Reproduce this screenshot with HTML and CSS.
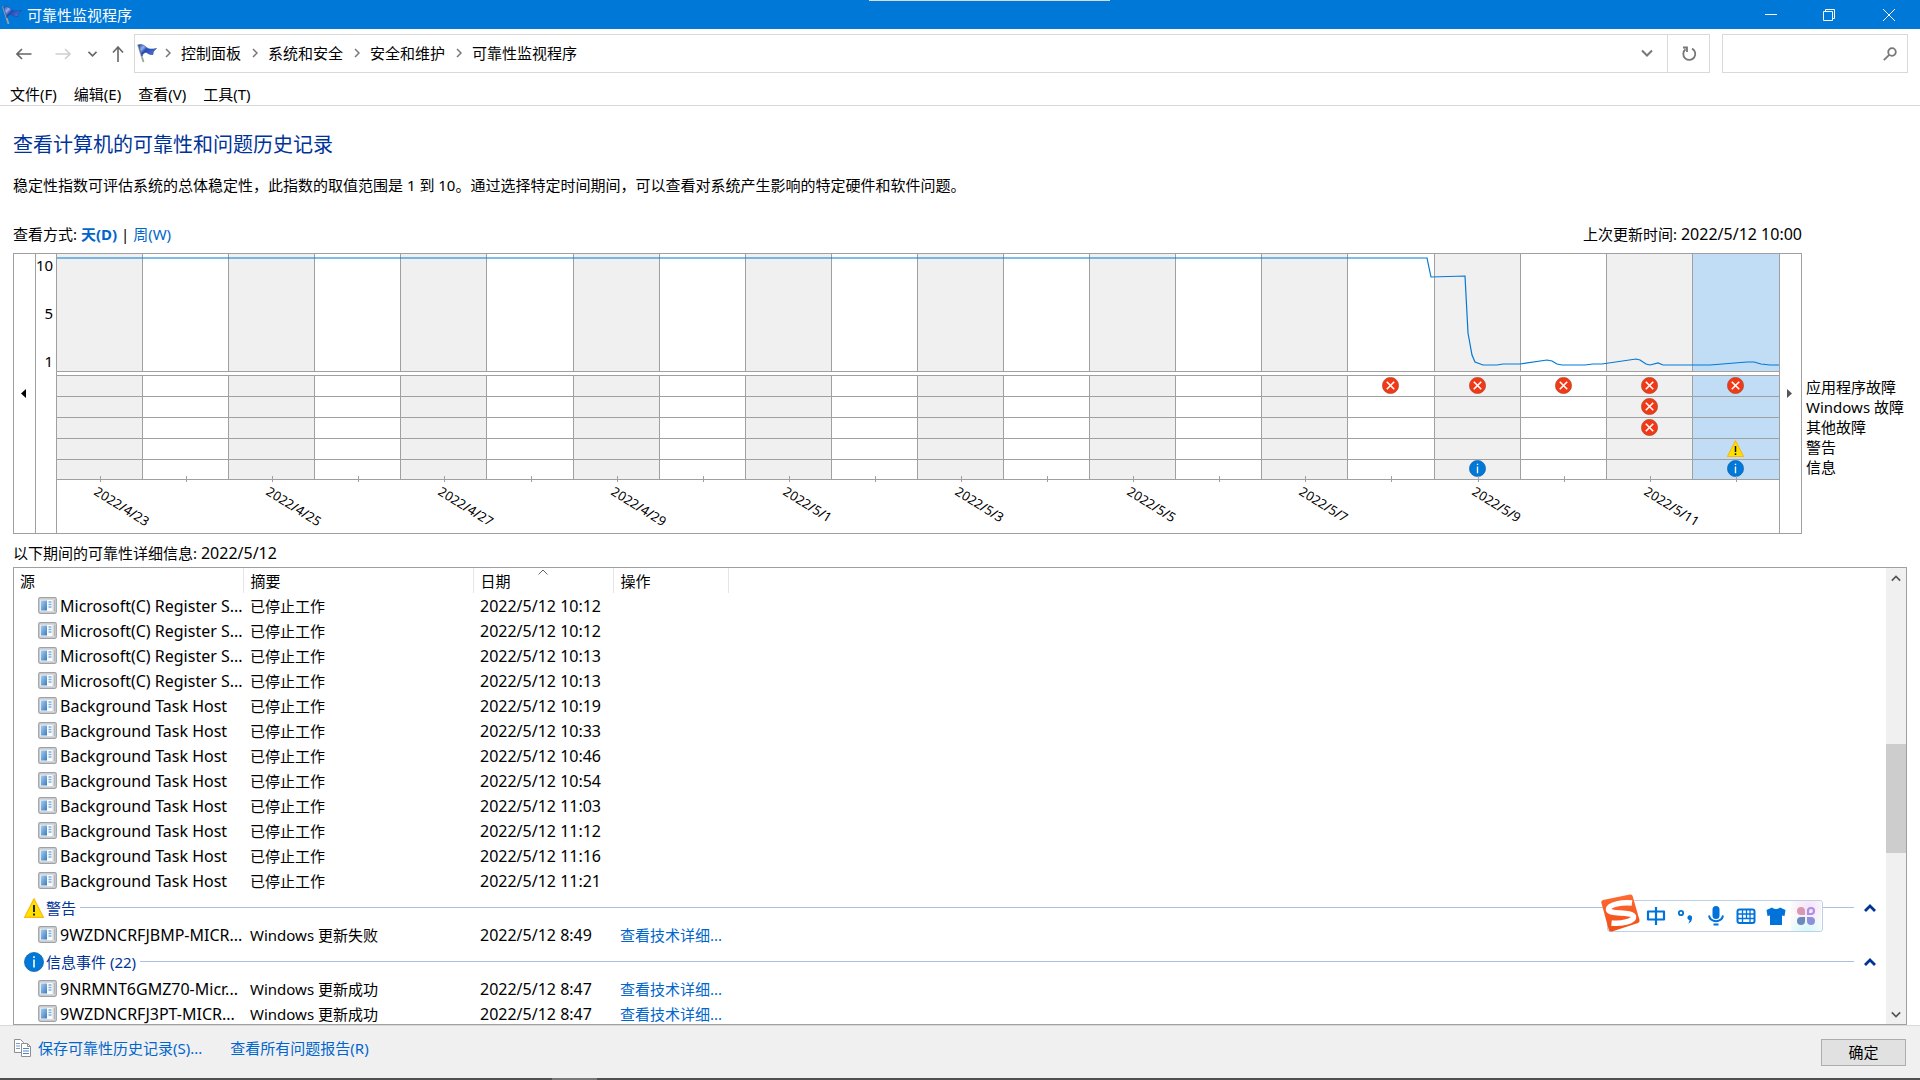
FILE: index.html
```html
<!DOCTYPE html>
<html lang="zh-CN">
<head>
    <meta charset="UTF-8">
    <meta name="viewport" content="width=device-width, initial-scale=1.0">
    <title>可靠性监视程序</title>
    <link rel="stylesheet" href="styles.css">
</head>
<body>
    <!-- Shared icons -->
    <svg class="sprite" aria-hidden="true">
        <defs>
            <linearGradient id="flagBlue" x1="0" y1="0" x2="1" y2="0.6">
                <stop offset="0" stop-color="#1d3f9c"/>
                <stop offset="0.3" stop-color="#8fb2f0"/>
                <stop offset="0.5" stop-color="#2547b4"/>
                <stop offset="1" stop-color="#4a76d8"/>
            </linearGradient>
            <linearGradient id="appBlue" x1="0" y1="0" x2="1" y2="1">
                <stop offset="0" stop-color="#a5cdf0"/>
                <stop offset="1" stop-color="#3a7cc0"/>
            </linearGradient>
            <linearGradient id="imeOrange" x1="0" y1="0" x2="0" y2="1">
                <stop offset="0" stop-color="#ff6a33"/>
                <stop offset="1" stop-color="#f04e14"/>
            </linearGradient>
        </defs>
        <symbol id="flag" viewBox="0 0 20 20">
            <path d="M1 1.500 6.500 19" stroke="#9aa2a9" stroke-width="1.800" fill="none"/>
            <path d="M1.500 2C4 .8 7 2 9.500 4.500c2 1.800 5 2 10 1-2.500 2-3.500 3-3.500 6-3 .5-4.500-.8-6.500-2C7.500 9 6 10.500 5 13z" fill="url(#flagBlue)" stroke="#27449b" stroke-width=".6"/>
        </symbol>
        <symbol id="error" viewBox="0 0 16 16">
            <circle cx="8" cy="8" r="7.600" fill="#f03a17" stroke="#b5482f" stroke-width=".7"/>
            <path d="M4.500 4.500l7 7M11.500 4.500l-7 7" stroke="#fff" stroke-width="1.500"/>
        </symbol>
        <symbol id="warning" viewBox="0 0 20 20">
            <path d="M10 .8 19.400 19.300H.6z" fill="#ffe100" stroke="#fcb814" stroke-width="1.200"/>
            <path d="M10 7v7M10 15.500v2" stroke="#111" stroke-width="1.800"/>
        </symbol>
        <symbol id="info" viewBox="0 0 20 20">
            <circle cx="10" cy="10" r="9.500" fill="#0078d7" stroke="#1560a8" stroke-width=".8"/>
            <path d="M10 4.300v1.700M10 7.500v8" stroke="#fff" stroke-width="1.600"/>
        </symbol>
        <symbol id="app" viewBox="0 0 19 17">
            <rect x=".7" y=".7" width="17.600" height="15.600" rx="1.500" fill="#d6d9dc" stroke="#9ea2a6" stroke-width="1.200"/>
            <rect x="2.500" y="3" width="12" height="11" fill="#fafbfc"/>
            <rect x="3" y="3.500" width="6" height="10" fill="url(#appBlue)"/>
            <path d="M10.500 5h3M10.500 7.500h3M10.500 10h3" stroke="#7fb0dc" stroke-width="1.300"/>
            <path d="M16.500 3v11" stroke="#b3b7bb" stroke-width="1"/>
        </symbol>
        <symbol id="chevronRight" viewBox="0 0 6 10">
            <path d="M1 1l4 4-4 4" fill="none" stroke="#777" stroke-width="1.500"/>
        </symbol>
        <symbol id="chevronDown" viewBox="0 0 12 8">
            <path d="M1 1.500l5 5 5-5" fill="none" stroke="currentColor" stroke-width="2"/>
        </symbol>
        <symbol id="chevronUp" viewBox="0 0 12 8">
            <path d="M1 6.500l5-5 5 5" fill="none" stroke="currentColor" stroke-width="2"/>
        </symbol>
        <symbol id="collapse" viewBox="0 0 12 8">
            <path d="M1 7l5-5 5 5" fill="none" stroke="currentColor" stroke-width="2.800"/>
        </symbol>
    </svg>

    <header class="titlebar">
        <svg class="flag"><use href="#flag"/></svg>
        <span class="title">可靠性监视程序</span>
        <div class="window-buttons">
            <button type="button" aria-label="最小化"><svg viewBox="0 0 12 12"><path d="M0 5.500h12"/></svg></button>
            <button type="button" aria-label="还原"><svg viewBox="0 0 12 12"><path d="M.5 2.500h9v9h-9zM2.500 2.500v-2h9v9h-2"/></svg></button>
            <button type="button" aria-label="关闭"><svg viewBox="0 0 12 12"><path d="M0 0l12 12M12 0L0 12"/></svg></button>
        </div>
    </header>

    <div class="navbar">
        <div class="nav-buttons">
            <button type="button" aria-label="后退"><svg width="16" height="12" viewBox="0 0 16 12"><path d="M15.500 6H1M6 1L1 6l5 5"/></svg></button>
            <button type="button" class="disabled" aria-label="前进" disabled><svg width="16" height="12" viewBox="0 0 16 12"><path d="M.5 6H15M10 1l5 5-5 5"/></svg></button>
            <button type="button" class="recent" aria-label="最近位置"><svg width="9" height="6" viewBox="0 0 9 6"><path d="M.5 .8l4 4 4-4"/></svg></button>
            <button type="button" class="up" aria-label="上移"><svg width="12" height="16" viewBox="0 0 12 16"><path d="M6 16V1M1 6.500L6 1l5 5.500"/></svg></button>
        </div>
        <nav class="address">
            <svg class="flag"><use href="#flag"/></svg>
            <ol class="breadcrumb">
                <li><svg><use href="#chevronRight"/></svg><a href="#">控制面板</a></li>
                <li><svg><use href="#chevronRight"/></svg><a href="#">系统和安全</a></li>
                <li><svg><use href="#chevronRight"/></svg><a href="#">安全和维护</a></li>
                <li><svg><use href="#chevronRight"/></svg><a href="#">可靠性监视程序</a></li>
            </ol>
            <button type="button" class="history" aria-label="以前的位置"><svg width="12" height="8"><use href="#chevronDown"/></svg></button>
            <button type="button" class="refresh" aria-label="刷新"><svg width="16" height="16" viewBox="0 0 16 16"><path d="M4.500 3.300A6 6 0 1 0 11 2.600M2 1.500h4v4.500" fill="none" stroke="#777" stroke-width="1.800"/></svg></button>
        </nav>
        <div class="search">
            <input type="text" aria-label="搜索">
            <svg width="14" height="14" viewBox="0 0 14 14"><circle cx="9" cy="5" r="3.800"/><path d="M6.200 7.800L.8 13.200"/></svg>
        </div>
    </div>

    <nav class="menubar">
        <button type="button">文件(F)</button>
        <button type="button">编辑(E)</button>
        <button type="button">查看(V)</button>
        <button type="button">工具(T)</button>
    </nav>

    <main>
        <h1>查看计算机的可靠性和问题历史记录</h1>
        <p class="intro">稳定性指数可评估系统的总体稳定性，此指数的取值范围是 1 到 10。通过选择特定时间期间，可以查看对系统产生影响的特定硬件和软件问题。</p>

        <div class="view-row">
            <div>查看方式: <a href="#" class="current">天(D)</a> | <a href="#">周(W)</a></div>
            <div>上次更新时间: <span class="latin">2022/5/12 10:00</span></div>
        </div>

        <div class="chart-row">
            <div class="chart">
                <button type="button" class="scroll-chart" aria-label="上一页"><svg width="5" height="9" viewBox="0 0 5 9"><path d="M5 0v9L0 4.500z" fill="#000"/></svg></button>
                <div class="axis"><span>10</span><span>5</span><span>1</span></div>
                <div class="plot">
                    <div class="days" id="days"></div>
                    <svg class="curve" viewBox="0 0 1722 117" preserveAspectRatio="none">
                        <polyline points="0,4 1370,4 1374,23 1408,22 1411,79 1415,101 1418,108 1426,111 1440,111 1446,110 1463,110 1490,106 1495,107 1500,110 1505,111 1528,111 1536,110 1545,110 1579,105 1583,106 1589,110 1593,111 1601,109 1606,111 1653,111 1690,108 1697,108 1704,110 1713,111 1722,111"/>
                    </svg>
                </div>
                <button type="button" class="scroll-chart next" aria-label="下一页"><svg width="5" height="9" viewBox="0 0 5 9"><path d="M0 0v9l5-4.500z" fill="#555"/></svg></button>
            </div>
            <ul class="legend">
                <li>应用程序故障</li>
                <li>Windows 故障</li>
                <li>其他故障</li>
                <li>警告</li>
                <li>信息</li>
            </ul>
        </div>

        <p class="details-label">以下期间的可靠性详细信息: <span class="latin">2022/5/12</span></p>

        <div class="details">
            <div class="table-area">
                <table>
                    <colgroup>
                        <col class="col-source">
                        <col class="col-summary">
                        <col class="col-date">
                        <col class="col-action">
                        <col>
                    </colgroup>
                    <thead>
                        <tr>
                            <th>源</th>
                            <th>摘要</th>
                            <th>日期<svg class="sort" viewBox="0 0 10 6"><path d="M.5 5.500L5 1l4.500 4.500"/></svg></th>
                            <th>操作</th>
                            <th></th>
                        </tr>
                    </thead>
                    <tbody id="events"></tbody>
                </table>
            </div>
            <div class="scrollbar">
                <button type="button" aria-label="向上滚动"><svg width="10" height="7"><use href="#chevronUp"/></svg></button>
                <div class="track"><div class="thumb"></div></div>
                <button type="button" aria-label="向下滚动"><svg width="10" height="7"><use href="#chevronDown"/></svg></button>
            </div>
        </div>
    </main>

    <footer>
        <svg class="copy" viewBox="0 0 17 18">
            <path d="M.5 .5h6l3 3v10h-9z" fill="#fff" stroke="#8a8f94"/>
            <path d="M2 4.500h4M2 7h4M2 9.500h4" stroke="#7a9cc8"/>
            <path d="M7.500 4.500h6l3 3v10h-9z" fill="#fff" stroke="#8a8f94"/>
            <path d="M9 9.500h6M9 12h6M9 14.500h6" stroke="#4b87cf"/>
            <path d="M13.500 4.500v3h3" fill="none" stroke="#8a8f94"/>
        </svg>
        <a href="#">保存可靠性历史记录(S)...</a>
        <a href="#" class="reports">查看所有问题报告(R)</a>
        <button type="button">确定</button>
    </footer>
    <div class="taskbar-edge"><span></span></div>

    <!-- Floating input method toolbar -->
    <div class="ime">
        <svg class="ime-logo" viewBox="0 0 40 38">
            <path d="M3 6L30 .5q2-.4 2.600 1.500L39.500 26q.5 2-1.500 3L12 37.500q-2.500.5-3.200-1.500L1.300 8.500Q1 6.500 3 6z" fill="url(#imeOrange)"/>
            <path d="M32 9C23 8 8.500 10 8.500 15.500c0 5.500 23.500 1.500 25 7 1 5-13 7.500-22 6.500" fill="none" stroke="#fff" stroke-width="5.500"/>
        </svg>
        <svg viewBox="0 0 20 20"><path d="M2 5.500h16v8H2zM10 1v18" fill="none" stroke="#0072d9" stroke-width="2.200" stroke-linejoin="round"/></svg>
        <svg viewBox="0 0 20 20"><circle cx="5" cy="7" r="2.200" fill="none" stroke="#0072d9" stroke-width="1.800"/><path d="M11.500 11a2.300 2.300 0 1 1 4.500 1c0 3-1.500 5-4 5.500 1-1 1.500-2 1.500-3.500a2.300 2.300 0 0 1-2-3z" fill="#0072d9"/></svg>
        <svg viewBox="0 0 20 20"><rect x="6.500" y="0" width="7" height="13" rx="3.500" fill="#0072d9"/><path d="M3 9.500c1 7.500 13 7.500 14 0M7.500 18.500h5" fill="none" stroke="#0072d9" stroke-width="2"/></svg>
        <svg viewBox="0 0 20 20"><rect x="1.500" y="3.500" width="17" height="13.500" rx="2" fill="none" stroke="#0072d9" stroke-width="2"/><path d="M2 8h16M2 12.500h16M6.500 4v13M10.500 4v8.500M14 4v13" stroke="#0072d9" stroke-width="1.300"/></svg>
        <svg viewBox="0 0 20 20"><path d="M6 1.500q4 3 8 0l5.500 2.500-1 6-2.500-.5V19H4V9.500l-2.500.5-1-6z" fill="#0072d9"/></svg>
        <div class="ime-tools"><svg viewBox="0 0 20 20"><path d="M9 9H5a4 4 0 1 1 4-4z" fill="#d997b0"/><path d="M12 8V5A3 3 0 1 1 15 8z" fill="none" stroke="#ab8fe8" stroke-width="2.200"/><path d="M9 11v4a4 4 0 1 1-4-4z" fill="#6c88bd"/><path d="M11 11h4a4 4 0 1 1-4 4z" fill="#8f90dc"/></svg></div>
    </div>

    <script src="script.js"></script>
</body>
</html>
```
FILE: styles.css
```css
* {
    box-sizing: border-box;
}
body {
    margin: 0;
    height: 100vh;
    display: flex;
    flex-direction: column;
    overflow: hidden;
    background-color: #fff;
    color: #000;
    font-family: "Noto Sans", "Noto Sans CJK SC", sans-serif;
    font-size: 15px;
    line-height: 20px;
}
button {
    padding: 0;
    border: none;
    background: none;
    color: inherit;
    font: inherit;
    display: flex;
    align-items: center;
    justify-content: center;
}
a {
    color: #0066cc;
    text-decoration: none;
}
ul, ol {
    margin: 0;
    padding: 0;
    list-style: none;
}
.sprite {
    position: absolute;
    width: 0;
    height: 0;
}
.flag {
    width: 20px;
    height: 20px;
    flex-shrink: 0;
}
/* Dates and file names run a little larger than the Chinese text */
.latin {
    font-size: 16px;
}

/* Title bar */
.titlebar {
    height: 29px;
    flex-shrink: 0;
    display: flex;
    align-items: center;
    gap: 5px;
    padding-left: 2px;
    background: linear-gradient(#d5dde4, #d5dde4) 869px 0 / 241px 1px no-repeat #0078d7;
    color: #fff;
}
.window-buttons {
    margin-left: auto;
    display: flex;
    height: 100%;
}
.window-buttons button {
    width: 58px;
}
.window-buttons button:last-child {
    width: 62px;
}
.window-buttons svg {
    width: 12px;
    height: 12px;
    fill: none;
    stroke: #fff;
}

/* Address bar */
.navbar {
    display: flex;
    padding: 5px 12px 0 0;
    flex-shrink: 0;
}
.nav-buttons {
    width: 134px;
    padding-left: 16px;
    display: flex;
    align-items: center;
}
.nav-buttons svg {
    fill: none;
    stroke: #666;
    stroke-width: 1.6;
}
.nav-buttons button {
    margin-right: 23px;
}
.nav-buttons .disabled {
    margin-right: 17px;
}
.nav-buttons .disabled svg {
    stroke: #d0d0d0;
}
.nav-buttons .recent {
    margin-right: 15px;
}
.nav-buttons .up {
    margin-right: 0;
}
.address {
    flex: 1;
    height: 39px;
    display: flex;
    align-items: center;
    border: 1px solid #d9d9d9;
    padding: 0 0 1px 2px;
}
.breadcrumb {
    display: flex;
    flex: 1;
}
.breadcrumb li {
    display: flex;
    align-items: center;
    padding-left: 11px;
}
.breadcrumb li:first-child {
    padding-left: 8px;
}
.breadcrumb svg {
    width: 6px;
    height: 10px;
    margin-right: 10px;
}
.breadcrumb a {
    color: #000;
}
.history {
    width: 40px;
    color: #777;
}
.refresh {
    width: 42px;
    align-self: stretch;
    margin-bottom: -1px;
    border-left: 1px solid #d9d9d9;
}
.search {
    width: 186px;
    height: 39px;
    margin-left: 12px;
    padding-right: 10px;
    display: flex;
    align-items: center;
    border: 1px solid #d9d9d9;
}
.search input {
    flex: 1;
    min-width: 0;
    height: 30px;
    border: none;
    outline: none;
    background: none;
}
.search svg {
    fill: none;
    stroke: #777;
    stroke-width: 1.8;
}

/* Menu */
.menubar {
    height: 33px;
    flex-shrink: 0;
    display: flex;
    align-items: flex-end;
    gap: 17px;
    padding: 0 10px 1px;
    border-bottom: 1px solid #d9d9d9;
}

main {
    flex: 1;
    min-height: 0;
    display: flex;
    flex-direction: column;
    padding: 0 13px;
}
h1 {
    margin: 25px 0 0;
    font-size: 20px;
    line-height: 28px;
    font-weight: 400;
    color: #003399;
}
.intro {
    margin: 16px 0 29px;
}
.view-row {
    display: flex;
    justify-content: space-between;
    margin-right: 105px;
    padding-bottom: 9px;
}
.current {
    font-weight: 700;
}

/* Reliability chart */
.chart-row {
    display: flex;
    flex-shrink: 0;
}
.chart {
    flex: 1;
    display: flex;
    height: 281px;
    border: 1px solid #a0a0a0;
}
.scroll-chart {
    width: 22px;
    padding-right: 2px;
    border-right: 1px solid #a0a0a0;
}
.scroll-chart.next {
    border-right: none;
    border-left: 1px solid #a0a0a0;
}
.axis {
    width: 20px;
    height: 118px;
    padding: 1px 3px 0 0;
    display: flex;
    flex-direction: column;
    gap: 28px;
    text-align: right;
}
.plot {
    flex: 1;
    position: relative;
    border-left: 1px solid #a0a0a0;
}
.days {
    display: flex;
    height: 100%;
}
.day {
    flex: 1;
    min-width: 0;
}
.graph {
    height: 118px;
    margin-bottom: 3px;
    border-right: 1px solid #a0a0a0;
    border-bottom: 1px solid #a0a0a0;
}
.marks {
    border-top: 1px solid #a0a0a0;
    border-right: 1px solid #a0a0a0;
}
.day:last-child .graph,
.day:last-child .marks {
    border-right: none;
}
.mark {
    height: 21px;
    padding-bottom: 2px;
    display: flex;
    align-items: center;
    justify-content: center;
    border-bottom: 1px solid #a0a0a0;
}
.mark:last-child {
    height: 20px;
}
.mark svg {
    width: 17px;
    height: 17px;
}
.day:nth-child(odd) .graph,
.day:nth-child(odd) .marks {
    background-color: #f0f0f0;
}
.day.selected .graph,
.day.selected .marks {
    background-color: #c0ddf5;
}
.date {
    position: relative;
    padding: 3px 0 0 43px;
    font-size: 13px;
    line-height: 16px;
    white-space: nowrap;
}
.date::before {
    content: "";
    position: absolute;
    left: 50%;
    top: -4px;
    height: 6px;
    border-left: 1px solid #a0a0a0;
}
.date span {
    display: inline-block;
    transform: rotate(32deg);
    transform-origin: 0 0;
}
.curve {
    position: absolute;
    top: 0;
    left: 0;
    width: 100%;
    height: 117px;
}
.curve polyline {
    fill: none;
    stroke: #0078d7;
    stroke-width: 1.2;
    vector-effect: non-scaling-stroke;
}
.legend {
    width: 105px;
    padding: 124px 0 0 4px;
    white-space: nowrap;
}

/* Details list */
.details-label {
    margin: 9px 0 4px;
}
.details {
    flex: 1;
    min-height: 0;
    display: flex;
    border: 1px solid #a0a0a0;
}
.table-area {
    flex: 1;
    overflow: hidden;
}
table {
    width: 100%;
    table-layout: fixed;
    border-collapse: collapse;
}
.col-source {
    width: 229px;
}
.col-summary {
    width: 230px;
}
.col-date {
    width: 140px;
}
.col-action {
    width: 115px;
}
th {
    position: relative;
    height: 25px;
    padding: 0 7px;
    font-weight: 400;
    text-align: left;
    border-right: 1px solid #e5e5e5;
}
th:first-child {
    padding-left: 6px;
}
th:last-child {
    border-right: none;
}
.sort {
    position: absolute;
    top: 1px;
    left: 50%;
    width: 10px;
    height: 6px;
    margin-left: -5px;
    fill: none;
    stroke: #666;
}
td {
    height: 25px;
    padding: 0 0 0 7px;
    overflow: hidden;
    white-space: nowrap;
}
.source {
    display: flex;
    align-items: center;
    gap: 3px;
    padding: 0 0 0 17px;
    font-size: 16px;
}
.source svg {
    width: 19px;
    height: 17px;
    flex-shrink: 0;
}
.group td {
    height: 29px;
    padding: 0 10px;
}
.group-head {
    display: flex;
    align-items: center;
    color: #003399;
}
.group-head .kind {
    width: 20px;
    height: 20px;
    margin-right: 2px;
}
.group-head .rule {
    flex: 1;
    height: 1px;
    margin: 0 10px 0 4px;
    background-color: #aebfe0;
}
.group-head .collapse {
    width: 12px;
    height: 8px;
}
.scrollbar {
    width: 20px;
    display: flex;
    flex-direction: column;
    background-color: #f0f0f0;
    color: #555;
}
.scrollbar button {
    height: 20px;
}
.track {
    flex: 1;
    display: flow-root;
}
.thumb {
    height: 109px;
    margin-top: 156px;
    background-color: #cdcdcd;
}

/* Footer */
footer {
    height: 53px;
    flex-shrink: 0;
    display: flex;
    align-items: center;
    padding: 0 14px 8px;
    background-color: #f0f0f0;
    border-top: 1px solid #d9d9d9;
}
.copy {
    width: 17px;
    height: 18px;
    margin-right: 7px;
}
.reports {
    margin-left: 28px;
}
footer button {
    width: 85px;
    height: 27px;
    margin: 8px 0 0 auto;
    background-color: #e1e1e1;
    border: 1px solid #adadad;
}
.taskbar-edge {
    height: 2px;
    flex-shrink: 0;
    background-color: #505050;
}
.taskbar-edge span {
    display: block;
    width: 45px;
    height: 2px;
    margin-left: 552px;
    background-color: #777;
}

/* Input method toolbar */
.ime {
    position: absolute;
    right: 97px;
    bottom: 148px;
    width: 216px;
    height: 32px;
    display: flex;
    align-items: center;
    gap: 10px;
    padding-left: 38px;
    background-color: #fff;
    border: 1px solid #bdd0e6;
    border-radius: 3px;
}
.ime svg {
    width: 20px;
    height: 20px;
    flex-shrink: 0;
}
.ime .ime-logo {
    position: absolute;
    left: -8px;
    top: -7px;
    width: 40px;
    height: 38px;
}
.ime-tools {
    width: 30px;
    height: 30px;
    margin-left: -5px;
    flex-shrink: 0;
    display: flex;
    align-items: center;
    justify-content: center;
    background: radial-gradient(circle at 60% 20%, #f6e2fa, transparent 60%), radial-gradient(circle at 50% 100%, #d4f8fa, transparent 60%), #fbfbf8;
}
```
FILE: script.js
```js
// Markers shown under each day: [row, icon]
const marks = {
    15: [[0, 'error']],
    16: [[0, 'error'], [4, 'info']],
    17: [[0, 'error']],
    18: [[0, 'error'], [1, 'error'], [2, 'error']],
    19: [[0, 'error'], [3, 'warning'], [4, 'info']]
};

const days = document.getElementById('days');
for (let i = 0; i < 20; i++) {
    const date = new Date(2022, 3, 23 + i);
    const label = `${date.getFullYear()}/${date.getMonth() + 1}/${date.getDate()}`;
    let cells = '';
    for (let row = 0; row < 5; row++) {
        const mark = (marks[i] || []).find(m => m[0] === row);
        cells += `<div class="mark">${mark ? `<svg><use href="#${mark[1]}"/></svg>` : ''}</div>`;
    }
    days.innerHTML += `
        <div class="day${i === 19 ? ' selected' : ''}">
            <div class="graph"></div>
            <div class="marks">${cells}</div>
            <div class="date">${i % 2 === 0 ? `<span>${label}</span>` : ''}</div>
        </div>`;
}

const register = 'Microsoft(C) Register S...';
const host = 'Background Task Host';
const stopped = '已停止工作';
const link = '<a href="#">查看技术详细...</a>';

const events = [
    [register, stopped, '10:12', ''],
    [register, stopped, '10:12', ''],
    [register, stopped, '10:13', ''],
    [register, stopped, '10:13', ''],
    [host, stopped, '10:19', ''],
    [host, stopped, '10:33', ''],
    [host, stopped, '10:46', ''],
    [host, stopped, '10:54', ''],
    [host, stopped, '11:03', ''],
    [host, stopped, '11:12', ''],
    [host, stopped, '11:16', ''],
    [host, stopped, '11:21', ''],
    { icon: 'warning', name: '警告' },
    ['9WZDNCRFJBMP-MICR...', 'Windows 更新失败', '8:49', link],
    { icon: 'info', name: '信息事件 (22)' },
    ['9NRMNT6GMZ70-Micr...', 'Windows 更新成功', '8:47', link],
    ['9WZDNCRFJ3PT-MICR...', 'Windows 更新成功', '8:47', link]
];

document.getElementById('events').innerHTML = events.map(item => {
    if (!Array.isArray(item)) {
        return `<tr class="group"><td colspan="5"><div class="group-head">
            <svg class="kind"><use href="#${item.icon}"/></svg><span>${item.name}</span>
            <span class="rule"></span>
            <button type="button" aria-label="折叠"><svg class="collapse"><use href="#collapse"/></svg></button>
        </div></td></tr>`;
    }
    const [source, summary, time, action] = item;
    return `<tr>
        <td><div class="source"><svg><use href="#app"/></svg><span>${source}</span></div></td>
        <td>${summary}</td>
        <td class="latin">2022/5/12 ${time}</td>
        <td>${action}</td>
        <td></td>
    </tr>`;
}).join('');
```
